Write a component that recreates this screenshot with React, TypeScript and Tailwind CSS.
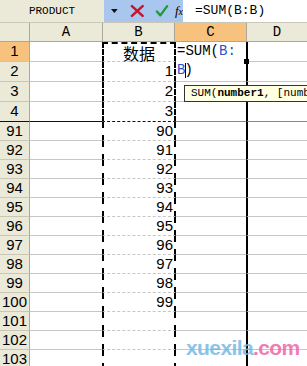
const rows: { n: number; b: string; h: number }[] = [
  { n: 1, b: "数据", h: 20 },
  { n: 2, b: "1", h: 20 },
  { n: 3, b: "2", h: 20 },
  { n: 4, b: "3", h: 20 },
  ...Array.from({ length: 13 }, (_, i) => ({
    n: 91 + i,
    b: 91 + i <= 100 ? String(90 + i) : "",
    h: 19,
  })),
];

function Row({ n, b, h }: { n: number; b: string; h: number }) {
  const first = n === 1;
  const split = n === 4;
  const hdrLine = split ? "border-b-[#111]" : "border-b-[#c9c6b6]";
  const cellLine = split ? "border-b-[#111]" : "border-b-[#c6c6c6]";
  return (
    <div className="flex" style={{ height: h }}>
      <div
        className={`w-[30px] shrink-0 flex items-center justify-center border-r border-r-[#aca899] border-b ${hdrLine} ${
          first ? "bg-[#f6c27e]" : "bg-[#ebe9d8]"
        } text-[15px] font-['Liberation_Sans',sans-serif] text-black`}
      >
        {n}
      </div>
      <div className={`w-[72px] shrink-0 border-b ${cellLine}`} />
      <div
        className={`w-[74px] shrink-0 flex items-center border-x-2 border-dashed border-x-black border-b ${
          split ? "border-b-[#111]" : "border-b-[#c6c6c6]"
        } ${first ? "border-t-2 border-t-black justify-center font-['Noto_Sans_CJK_SC',sans-serif] text-[16px]" : "justify-end pr-[1px] font-['Liberation_Sans',sans-serif] text-[15px]"} text-black`}
      >
        {b}
      </div>
      <div className={`w-[70px] shrink-0 border-b ${split ? "border-b-[#888]" : "border-b-[#c6c6c6]"}`} />
      <div className={`flex-1 border-l-2 border-l-black border-b ${split ? "border-b-[#888]" : "border-b-[#c6c6c6]"}`} />
    </div>
  );
}

export default function App() {
  return (
    <div className="w-[307px] h-[366px] overflow-hidden bg-white relative select-none">
      {/* formula bar */}
      <div className="flex h-[23px] border-b border-[#c9c6b6]">
        <div className="w-[104px] bg-[#ebe9d8] flex items-center justify-center text-[11px] font-['Liberation_Mono',monospace] text-black">
          PRODUCT
        </div>
        <div className="w-[79px] bg-[#a9c6ef] flex items-center pl-[6px] gap-[11px]">
          <svg width="9" height="6" viewBox="0 0 9 6">
            <path d="M1 1h7L4.5 5z" fill="#111" />
          </svg>
          <svg width="15" height="14" viewBox="0 0 15 14">
            <path d="M2 2l11 10M13 2L2 12" stroke="#c4162a" strokeWidth="2.6" strokeLinecap="round" />
          </svg>
          <svg width="14" height="14" viewBox="0 0 14 14">
            <path d="M2 7.5l3.5 4L12.5 2" stroke="#1f9a3a" strokeWidth="2.4" fill="none" strokeLinecap="round" strokeLinejoin="round" />
          </svg>
          <span className="italic text-[13px] font-['Liberation_Serif',serif] text-black -ml-[5px]">
            f<span className="text-[10px]">x</span>
          </span>
        </div>
        <div className="flex-1 bg-white flex items-center pl-[12px] text-[13px] font-['Liberation_Mono',monospace] text-black">
          =SUM(B:B)
        </div>
      </div>

      {/* column headers */}
      <div className="flex h-[19px] bg-[#ebe9d8] border-b border-[#aca899] text-[14px] font-['Liberation_Mono',monospace] text-black">
        <div className="w-[30px] border-r border-[#aca899]" />
        <div className="w-[73px] border-r border-[#aca899] flex items-center justify-center">A</div>
        <div className="w-[72px] border-r border-[#aca899] flex items-center justify-center">B</div>
        <div className="w-[72px] border-r border-[#aca899] bg-[#f6c27e] flex items-center justify-center">C</div>
        <div className="flex-1 flex items-center justify-center">D</div>
      </div>

      {/* grid */}
      <div className="relative">
        {rows.map((r) => (
          <Row key={r.n} {...r} />
        ))}

        {/* in-cell editor over C1:C2 */}
        <div className="absolute left-[176px] top-0 w-[70px] h-[38px] bg-white pl-[1px] text-[14px] leading-[19px] font-['Liberation_Mono',monospace] text-black">
          <div>
            =SUM(<span className="text-[#2d4fc8]">B:</span>
          </div>
          <div className="flex items-center">
            <span className="text-[#2d4fc8]">B</span>
            <span className="w-px h-[15px] bg-black" />
            <span className="-ml-[2px]">)</span>
          </div>
          <div className="absolute right-[-3px] top-[17px] w-[5px] h-[5px] bg-black" />
        </div>

        {/* function tooltip, runs past the window edge */}
        <div className="absolute left-[184px] top-[43px] right-0 h-[17px] bg-[#ffffe1] border border-r-0 border-[#333] flex items-center pl-[6px] text-[11px] font-['Liberation_Mono',monospace] text-black whitespace-nowrap overflow-hidden">
          SUM(<b>number1</b>, [numb
        </div>
      </div>

      {/* watermark */}
      <div className="absolute left-[186px] top-[336px] text-[21px] leading-[24px] font-bold font-['Liberation_Sans',sans-serif] tracking-[-0.6px] opacity-80">
        <span className="text-[#6db6e3]">xuexila</span>
        <span className="text-[#ea5fa3]">.com</span>
      </div>
    </div>
  );
}
